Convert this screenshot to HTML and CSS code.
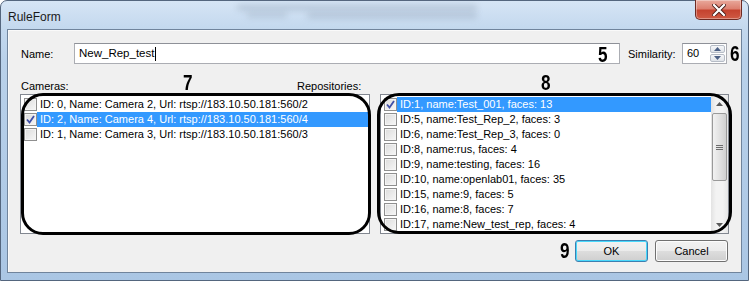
FILE: index.html
```html
<!DOCTYPE html>
<html>
<head>
<meta charset="utf-8">
<link rel="stylesheet" href="styles.css">
</head>
<body>
<div class="window">
  <div class="titlebar">
    <span class="title">RuleForm</span>
    <div class="glass g1"></div>
    <div class="glass g2"></div>
    <div class="glass g3"></div>
    <div class="close">
      <svg width="14" height="12" viewBox="0 0 14 12"><path d="M2 1 L12 11 M12 1 L2 11" stroke="#4a1d18" stroke-width="4" stroke-linecap="square"/><path d="M2 1 L12 11 M12 1 L2 11" stroke="#fff" stroke-width="2.2" stroke-linecap="square"/></svg>
    </div>
  </div>
  <div class="client">
    <div class="row-name">
      <span class="lbl name-lbl">Name:</span>
      <div class="textbox">New_Rep_test<span class="caret"></span><span class="mark m5">5</span></div>
      <span class="lbl sim-lbl">Similarity:</span>
      <div class="spin">
        <span class="spin-val">60</span>
        <div class="arrows">
          <div class="arr"><svg width="7" height="4" viewBox="0 0 7 4"><path d="M0 4 L3.5 0 L7 4Z" fill="#4d6185"/></svg></div>
          <div class="arr"><svg width="7" height="4" viewBox="0 0 7 4"><path d="M0 0 L3.5 4 L7 0Z" fill="#4d6185"/></svg></div>
        </div>
      </div>
      <span class="mark m6">6</span>
    </div>
    <div class="row-labels">
      <span class="lbl cam-lbl">Cameras:</span>
      <span class="lbl rep-lbl">Repositories:</span>
      <span class="mark m7">7</span>
      <span class="mark m8">8</span>
    </div>
    <div class="lists">
      <div class="listbox cams">
        <div class="item"><span class="cb"></span><span class="txt">ID: 0, Name: Camera 2, Url: rtsp://183.10.50.181:560/2</span></div>
        <div class="item sel"><span class="cb on"><svg width="9" height="9" viewBox="0 0 9 9"><path d="M1 4.5 L3.5 7.5 L8 1" fill="none" stroke="#3f4fa8" stroke-width="1.8"/></svg></span><span class="txt">ID: 2, Name: Camera 4, Url: rtsp://183.10.50.181:560/4</span></div>
        <div class="item"><span class="cb"></span><span class="txt">ID: 1, Name: Camera 3, Url: rtsp://183.10.50.181:560/3</span></div>
        <div class="annot"></div>
      </div>
      <div class="listbox repos">
        <div class="items">
          <div class="item sel"><span class="cb on"><svg width="9" height="9" viewBox="0 0 9 9"><path d="M1 4.5 L3.5 7.5 L8 1" fill="none" stroke="#3f4fa8" stroke-width="1.8"/></svg></span><span class="txt">ID:1, name:Test_001, faces: 13</span></div>
          <div class="item"><span class="cb"></span><span class="txt">ID:5, name:Test_Rep_2, faces: 3</span></div>
          <div class="item"><span class="cb"></span><span class="txt">ID:6, name:Test_Rep_3, faces: 0</span></div>
          <div class="item"><span class="cb"></span><span class="txt">ID:8, name:rus, faces: 4</span></div>
          <div class="item"><span class="cb"></span><span class="txt">ID:9, name:testing, faces: 16</span></div>
          <div class="item"><span class="cb"></span><span class="txt">ID:10, name:openlab01, faces: 35</span></div>
          <div class="item"><span class="cb"></span><span class="txt">ID:15, name:9, faces: 5</span></div>
          <div class="item"><span class="cb"></span><span class="txt">ID:16, name:8, faces: 7</span></div>
          <div class="item"><span class="cb"></span><span class="txt">ID:17, name:New_test_rep, faces: 4</span></div>
        </div>
        <div class="scrollbar">
          <div class="sb-btn"><svg width="7" height="4" viewBox="0 0 7 4"><path d="M0 4 L3.5 0 L7 4Z" fill="#5a5a5a"/></svg></div>
          <div class="sb-track">
            <div class="thumb"><svg width="7" height="7" viewBox="0 0 7 7"><path d="M0 1.5 H7 M0 3.5 H7 M0 5.5 H7" stroke="#6c6c6c" stroke-width="1"/></svg></div>
          </div>
          <div class="sb-btn"><svg width="7" height="4" viewBox="0 0 7 4"><path d="M0 0 L3.5 4 L7 0Z" fill="#5a5a5a"/></svg></div>
        </div>
        <div class="annot"></div>
      </div>
    </div>
    <div class="buttons">
      <span class="mark m9">9</span>
      <div class="btn ok">OK</div>
      <div class="btn cancel">Cancel</div>
    </div>
  </div>
</div>
</body>
</html>
```
FILE: styles.css
```css
* { box-sizing: border-box; }
html, body { margin: 0; padding: 0; }
body {
  width: 749px;
  height: 281px;
  overflow: hidden;
  font-family: "Liberation Sans", Arial, sans-serif;
  font-size: 11px;
  color: #000;
  background: #fff;
}
.window {
  width: 749px;
  height: 281px;
  border: 1px solid #54667e;
  border-radius: 7px 7px 0 0;
  background: linear-gradient(180deg, #d6e5f5 0px, #c3d8ee 28px, #b9d1ea 60px, #aac6e4 281px);
  display: flex;
  flex-direction: column;
  padding: 0 6px 7px 6px;
}
.titlebar {
  height: 28px;
  flex: none;
  position: relative;
  display: flex;
  align-items: center;
}
.title {
  font-family: "Liberation Sans", Arial, sans-serif;
  font-size: 12px;
  color: #1a1a1a;
  margin-left: 1px;
  margin-top: 4px;
}
.glass {
  position: absolute;
  background: rgba(110, 125, 145, 0.3);
  filter: blur(3px);
  border-radius: 3px;
}
.g1 { left: 230px; top: 4px; width: 240px; height: 5px; }
.g2 { left: 300px; top: 12px; width: 170px; height: 5px; }
.g3 { left: 240px; top: 12px; width: 40px; height: 4px; }
.close {
  position: absolute;
  right: 0px;
  top: -1px;
  width: 47px;
  height: 20px;
  border: 1px solid #6e2a22;
  border-top: none;
  border-radius: 0 0 5px 5px;
  background: linear-gradient(180deg, #e9a99c 0%, #dd8070 45%, #c5432f 55%, #cf5a44 100%);
  box-shadow: inset 0 0 0 1px rgba(255,255,255,0.35);
  display: flex;
  align-items: center;
  justify-content: center;
}
.client {
  flex: 1;
  background: #f0f0f0;
  border: 1px solid #70849c;
  box-shadow: inset 1px 1px 0 #fafafa;
  display: flex;
  flex-direction: column;
  padding: 13px 0 0 12px;
}
.lbl { white-space: nowrap; }
.row-name {
  display: flex;
  align-items: center;
  height: 21px;
  position: relative;
}
.name-lbl { width: 54px; padding-left: 1px; }
.textbox {
  width: 546px;
  height: 21px;
  background: #fff;
  border: 1px solid #abadb3;
  border-top-color: #8e9198;
  padding: 3px 0 0 4px;
  font-size: 11.5px;
  position: relative;
  display: flex;
  align-items: flex-start;
}
.caret { display: inline-block; width: 1px; height: 14px; background: #000; margin-left: 1px; }
.sim-lbl { margin-left: 8px; width: 54px; }
.spin {
  width: 45px;
  height: 21px;
  background: #fff;
  border: 1px solid #abadb3;
  border-top-color: #8e9198;
  display: flex;
  justify-content: space-between;
  padding: 1px 1px 1px 4px;
}
.spin-val { padding-top: 2px; }
.arrows { width: 15px; display: flex; flex-direction: column; gap: 1px; }
.arr {
  flex: 1;
  border: 1px solid #b6bcc6;
  border-radius: 2px;
  background: linear-gradient(180deg, #f6f7f9, #dfe3e8);
  display: flex;
  align-items: center;
  justify-content: center;
}
.mark {
  position: absolute;
  font-family: "Liberation Sans", Arial, sans-serif;
  font-weight: bold;
  font-size: 22px;
  line-height: 22px;
  transform: scaleX(0.78);
  transform-origin: left top;
  color: #000;
}
.m5 { left: 523px; top: 0px; }
.m6 { left: 710px; top: 0px; }
.row-labels {
  margin-top: 15px;
  height: 15px;
  position: relative;
}
.cam-lbl { position: absolute; left: 1px; top: 1px; }
.rep-lbl { position: absolute; left: 277px; top: 1px; }
.m7 { left: 163px; top: -7px; }
.m8 { left: 521px; top: -7px; }
.lists {
  display: flex;
  gap: 10px;
  height: 140px;
}
.listbox {
  background: #fff;
  border: 1px solid #828790;
  position: relative;
}
.cams { width: 350px; padding-top: 2px; }
.repos { width: 349px; display: flex; padding-top: 2px; }
.items { flex: 1; }
.item {
  height: 15px;
  display: flex;
  align-items: center;
  padding-left: 3px;
  white-space: nowrap;
}
.cb {
  width: 13px;
  height: 13px;
  flex: none;
  border: 1px solid #8f8f8f;
  background: linear-gradient(135deg, #dcdcdc, #f7f7f7);
  box-shadow: inset 0 0 0 1px #f4f4f4;
  display: flex;
  align-items: center;
  justify-content: center;
}
.txt {
  flex: 1;
  height: 15px;
  line-height: 15px;
  padding-left: 3px;
}
.sel .txt { background: #3399ff; color: #fff; }
.scrollbar {
  width: 17px;
  margin-top: -2px;
  background: linear-gradient(90deg, #e3e3e3, #f3f3f3 30%, #f3f3f3 70%, #e6e6e6);
  display: flex;
  flex-direction: column;
}
.sb-btn {
  height: 17px;
  display: flex;
  align-items: center;
  justify-content: center;
}
.sb-track { flex: 1; padding-top: 1px; }
.thumb {
  margin: 0 1px;
  height: 68px;
  border: 1px solid #9a9a9a;
  border-radius: 2px;
  background: linear-gradient(90deg, #f2f2f2, #e2e2e2 50%, #d0d0d0);
  display: flex;
  align-items: center;
  justify-content: center;
}
.annot {
  position: absolute;
  left: 0px;
  top: -2px;
  right: -2px;
  bottom: -2px;
  border: 3px solid #000;
  border-radius: 22px;
  pointer-events: none;
}
.repos .annot { left: -4px; right: -4px; top: -2px; bottom: -1px; }
.buttons {
  margin-top: 6px;
  display: flex;
  justify-content: flex-end;
  gap: 7px;
  padding-right: 13px;
  position: relative;
}
.m9 { left: 540px; top: 0px; }
.btn {
  width: 73px;
  height: 22px;
  border: 1px solid #707070;
  border-radius: 3px;
  background: linear-gradient(180deg, #f2f2f2 0%, #ebebeb 50%, #dddddd 51%, #cfcfcf 100%);
  box-shadow: inset 0 0 0 1px #fcfcfc;
  display: flex;
  align-items: center;
  justify-content: center;
  color: #000;
  font-size: 11px;
}
.btn.ok {
  border-color: #3c7fb1;
  box-shadow: inset 0 0 0 1px #48d8fb;
}
```
